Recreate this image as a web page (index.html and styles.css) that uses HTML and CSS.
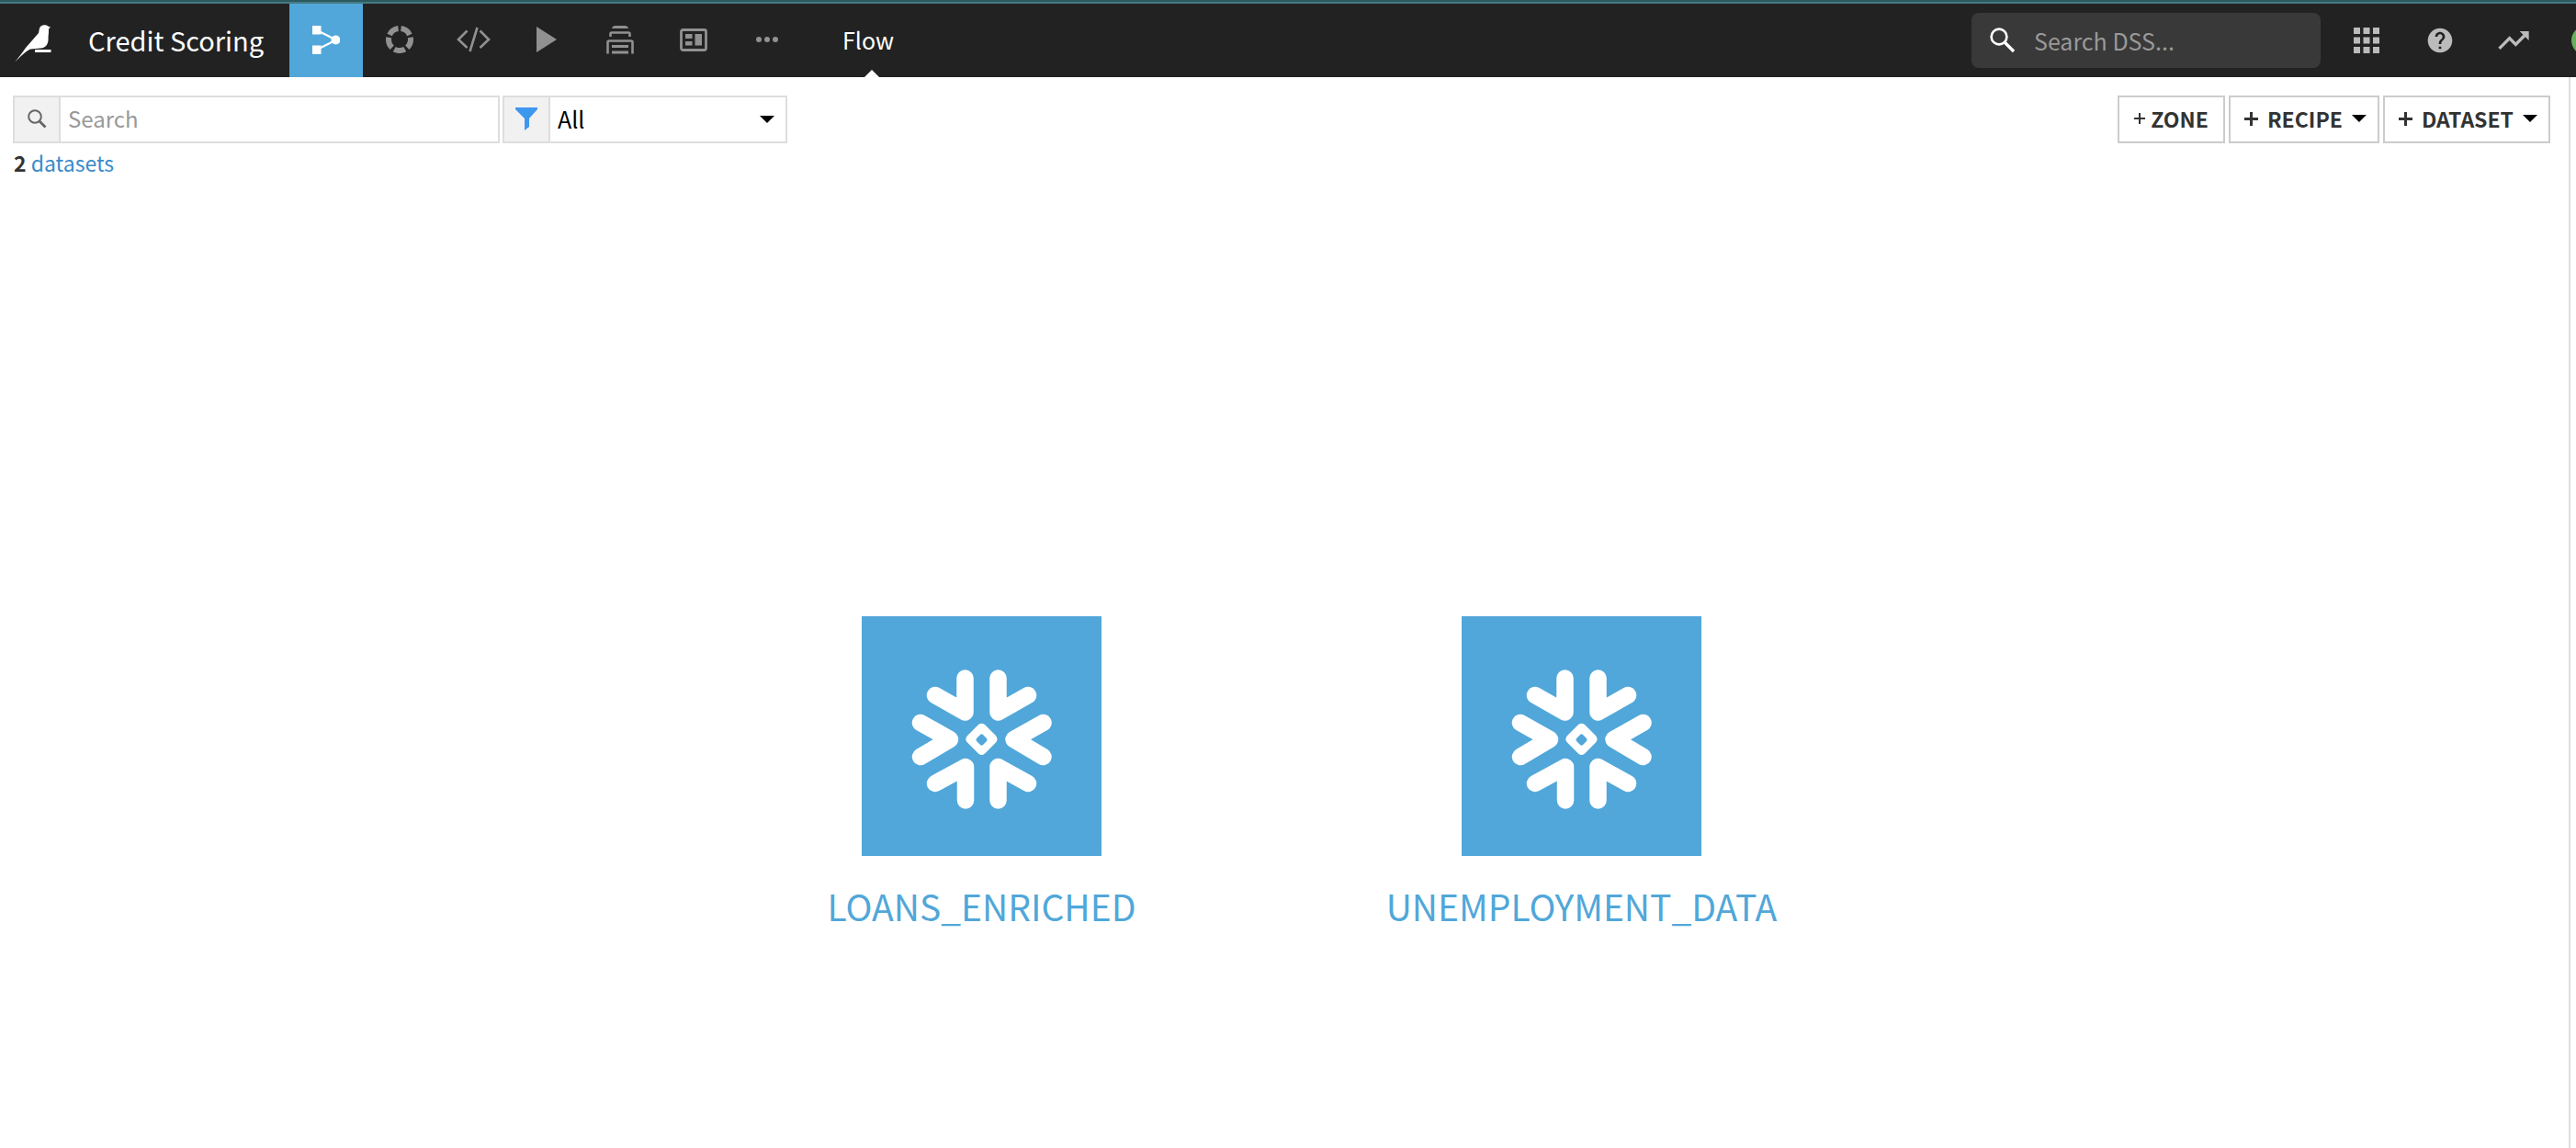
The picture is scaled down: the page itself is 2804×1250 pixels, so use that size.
FILE: index.html
```html
<!DOCTYPE html>
<html lang="en">
<head>
<meta charset="utf-8">
<title>Credit Scoring – Flow</title>
<link rel="stylesheet" href="styles.css">
</head>
<body>
<header class="topbar">
  <a class="logo" href="#" aria-label="Home">
    <svg width="40" height="41" viewBox="0 0 40 41"><path fill="#fff" d="M0 40.500C4 36 8 31 12 25L26 9C27 5 26.500 4 28 2C30-.5 35-.5 37 2L39 2.500L37 4.500C37 8 37 10 36.500 13C37 20 35 25 28 25.500L17 26.500C12 29 7 34 0 40.500Z"/><path fill="#fff" d="M22 27H39.500V30H22Z"/></svg>
  </a>
  <a class="project" href="#">Credit Scoring</a>
  <nav class="nav" aria-label="Project">
    <a class="nav-item active" href="#" aria-label="Flow"><svg width="30" height="31" viewBox="0 0 30 31"><path d="M5 5L26 15.500L5 26" fill="none" stroke="#fff" stroke-width="2.200"/><path fill="#fff" d="M0 0H9.500V9.500H0ZM0 21.500H9.500V31H0Z"/><circle cx="25.500" cy="15.500" r="5" fill="#fff"/></svg></a>
    <a class="nav-item" href="#" aria-label="Lab"><svg width="30" height="30" viewBox="-15 -15 30 30"><circle r="12" fill="none" stroke="#919191" stroke-width="6" pathLength="100" stroke-dasharray="16 4" transform="rotate(-82.800)"/></svg></a>
    <a class="nav-item" href="#" aria-label="Code"><svg width="37" height="28" viewBox="0 0 37 28"><path d="M11.500 4.500L2 14L11.500 23M25.500 4.500L35 14L25.500 23M22.500 1L14.500 27" fill="none" stroke="#919191" stroke-width="2.600"/></svg></a>
    <a class="nav-item" href="#" aria-label="Jobs"><svg width="28" height="28" viewBox="0 0 28 28"><path d="M3 0L25 14L3 28Z" fill="#919191"/></svg></a>
    <a class="nav-item" href="#" aria-label="Deploy"><svg width="30" height="31" viewBox="0 0 30 31"><path d="M6 3Q6.500 0 10 0H20Q23.500 0 24 3ZM6 21H24V24H6ZM6 27.500H24V30.500H6Z" fill="#919191"/><path d="M4.500 12V9Q4.500 7.500 6 7.500H24Q25.500 7.500 25.500 9V12M1.500 30.500V18Q1.500 16.500 3 16.500H27Q28.500 16.500 28.500 18V30.500" fill="none" stroke="#919191" stroke-width="2.600"/></svg></a>
    <a class="nav-item" href="#" aria-label="Dashboards"><svg width="30" height="25" viewBox="0 0 30 25"><rect x="1.500" y="1.500" width="27" height="22" rx="2" fill="none" stroke="#919191" stroke-width="2.800"/><path d="M6 6H13.500V11H6ZM6 14H13.500V18.500H6ZM16.500 6H24V18.500H16.500Z" fill="#919191"/></svg></a>
    <a class="nav-item" href="#" aria-label="More"><svg width="24" height="6" viewBox="0 0 24 6"><g fill="#919191"><circle cx="3" cy="3" r="3"/><circle cx="12" cy="3" r="3"/><circle cx="21" cy="3" r="3"/></g></svg></a>
  </nav>
  <a class="crumb" href="#">Flow</a>
  <div class="tools">
    <label class="dss-search">
      <svg width="28" height="28" viewBox="0 0 28 28"><circle cx="10" cy="10" r="8.400" fill="none" stroke="#fff" stroke-width="2.600"/><path d="M16 16L26 26" stroke="#fff" stroke-width="3.400"/></svg>
      <input type="search" placeholder="Search DSS..." aria-label="Search DSS">
    </label>
    <button class="tool" aria-label="Applications"><svg width="28" height="28" viewBox="0 0 28 28"><path fill="#bbb" d="M0 0H7V7H0ZM10.500 0H17.500V7H10.500ZM21 0H28V7H21ZM0 10.500H7V17.500H0ZM10.500 10.500H17.500V17.500H10.500ZM21 10.500H28V17.500H21ZM0 21H7V28H0ZM10.500 21H17.500V28H10.500ZM21 21H28V28H21Z"/></svg></button>
    <button class="tool" aria-label="Help"><svg width="32" height="32" viewBox="0 0 24 24"><path fill="#bbb" d="M12 2C6.480 2 2 6.480 2 12s4.480 10 10 10 10-4.480 10-10S17.520 2 12 2zm1 17h-2v-2h2v2zm2.070-7.750l-.9.920C13.450 12.900 13 13.500 13 15h-2v-.5c0-1.100.45-2.100 1.170-2.830l1.240-1.260c.37-.36.590-.86.590-1.410 0-1.100-.9-2-2-2s-2 .9-2 2H8c0-2.210 1.790-4 4-4s4 1.790 4 4c0 .88-.36 1.680-.93 2.250z"/></svg></button>
    <button class="tool" aria-label="Activity"><svg width="40" height="40" viewBox="0 0 24 24"><path fill="#bbb" d="M16 6l2.290 2.290-4.880 4.880-4-4L2 16.590 3.410 18l6-6 4 4 6.300-6.290L22 12V6z"/></svg></button>
    <button class="avatar" aria-label="Profile"></button>
  </div>
</header>
<main class="page">
  <section class="content">
    <div class="toolbar">
      <label class="field search">
        <span class="addon"><svg width="21" height="21" viewBox="0 0 21 21"><circle cx="8" cy="8" r="6.800" fill="none" stroke="#666" stroke-width="2"/><path d="M12.500 12.500L19.500 19.500" stroke="#666" stroke-width="2.800"/></svg></span>
        <input type="text" placeholder="Search" aria-label="Search">
      </label>
      <label class="field filter">
        <span class="addon"><svg width="24" height="25" viewBox="0 0 24 25"><path fill="#3e97ef" d="M0 0H24V2L15 12V21L10 25V12L0 2Z"/></svg></span>
        <select aria-label="Filter"><option>All</option></select>
        <span class="caret"></span>
      </label>
      <div class="actions">
        <button class="btn zone"><svg width="12" height="14" viewBox="0 0 12 14"><path d="M0 7H12M6 1V13" stroke="#333" stroke-width="2"/></svg>ZONE</button>
        <button class="btn"><svg width="15" height="15" viewBox="0 0 15 15"><path d="M0 7.500H15M7.500 0V15" stroke="#333" stroke-width="3"/></svg>RECIPE<span class="caret"></span></button>
        <button class="btn"><svg width="15" height="15" viewBox="0 0 15 15"><path d="M0 7.500H15M7.500 0V15" stroke="#333" stroke-width="3"/></svg>DATASET<span class="caret"></span></button>
      </div>
    </div>
    <p class="count"><b>2</b> <a href="#">datasets</a></p>
    <div class="flow">
      <a class="node" href="#"><svg class="tile" viewBox="0 0 261 261"><rect width="261" height="261" fill="#51a7d9"/><g id="flake"><g fill="none" stroke="#fff" stroke-width="18.500" stroke-linecap="round" stroke-linejoin="round"><path d="M80 86L112.500 104.500V67.500M181 86L148.500 104.500V67.500M80 182L113 164V200.500M181 182L148.500 164V200.500M64 116L96 134L64 153M197.500 116L165.500 134L197.500 153"/></g><path fill="#fff" fill-rule="evenodd" d="M127 118Q130.500 115.500 134 118L146 130Q149 134 146 137.500L134 149.500Q130.500 152.500 127 149.500L115 137.500Q111.500 134 115 130ZM129 129L125 133Q124 134.500 125 136L129 140Q130.500 141.500 132 140L136 136Q137 134.500 136 133L132 129Q130.500 127.500 129 129Z"/></g></svg><span>LOANS_ENRICHED</span></a>
      <a class="node" href="#"><svg class="tile" viewBox="0 0 261 261"><rect width="261" height="261" fill="#51a7d9"/><use href="#flake"/></svg><span>UNEMPLOYMENT_DATA</span></a>
    </div>
  </section>
  <aside class="rail"></aside>
</main>
</body>
</html>
```
FILE: styles.css
```css
* { box-sizing: border-box; }

body {
  margin: 0;
  min-height: 100vh;
  display: flex;
  flex-direction: column;
  overflow-x: hidden;
  background: #fff;
  color: #333;
  font-family: "Noto Sans CJK SC", "Noto Sans", sans-serif;
  font-size: 24px;
  line-height: 32px;
}

a { color: inherit; text-decoration: none; }
svg { display: block; flex: none; }
button, input, select { font: inherit; color: inherit; margin: 0; padding: 0; border: 0; background: none; }

/* Top bar */
.topbar {
  display: flex;
  height: 84px;
  border-top: 2px solid #285a60;
  box-shadow: inset 0 2px #467a82;
  background: #222;
  color: #fff;
}
.logo { padding: 25px 0 0 16px; width: 96px; }
.project { width: 219px; padding-top: 25px; font-size: 29px; white-space: nowrap; }
.nav { display: flex; padding-top: 2px; }
.nav-item { width: 80px; display: flex; align-items: center; justify-content: center; padding-bottom: 2px; }
.nav-item.active { background: #51a7d9; }
.crumb { position: relative; margin-left: 42px; padding-top: 25px; font-size: 25px; }
.crumb::after {
  content: "";
  position: absolute;
  right: -8px;
  bottom: 0;
  left: 0;
  width: 16px;
  height: 8px;
  margin: 0 auto;
  background: #fff;
  clip-path: polygon(50% 0, 100% 100%, 0 100%);
}
.tools { display: flex; align-items: center; margin-left: auto; margin-right: -27px; padding-top: 2px; }
.dss-search {
  display: flex;
  align-items: center;
  width: 380px;
  height: 60px;
  margin-right: 10px;
  padding-left: 20px;
  gap: 20px;
  border-radius: 8px;
  background: #393939;
}
.dss-search input { width: 280px; outline: 0; font-size: 25px; }
.dss-search input::placeholder { color: #999; opacity: 1; }
.tool { width: 80px; height: 80px; display: flex; align-items: center; justify-content: center; }
.avatar { width: 32px; height: 32px; margin-left: 23px; border-radius: 50%; background: #67ae5b; }

/* Flow page */
.page { flex: 1; display: flex; }
.content { flex: 1; display: flex; flex-direction: column; padding: 20px 20px 0 14px; }
.rail { width: 8px; border-left: 2px solid #ddd; }

.toolbar { display: flex; gap: 3px; }
.field { position: relative; display: flex; height: 52px; border: 2px solid #ddd; }
.search { width: 530px; }
.filter { width: 310px; }
.addon {
  flex: none;
  width: 50px;
  display: flex;
  align-items: center;
  justify-content: center;
  padding-bottom: 2px;
  border-right: 2px solid #ddd;
  background: #f1f1f1;
}
.field input, .field select { flex: 1; min-width: 0; padding: 0 0 2px 8px; outline: 0; }
.field select { appearance: none; color: #000; font-size: 25px; }
.field input::placeholder { color: #999; opacity: 1; }
.caret { width: 16px; height: 8px; background: #000; clip-path: polygon(0 0, 100% 0, 50% 100%); }
.filter .caret { position: absolute; right: 12px; top: 20px; }

.actions { display: flex; gap: 4px; margin-left: auto; }
.btn {
  display: flex;
  align-items: center;
  height: 52px;
  padding: 0 12px 2px 15px;
  gap: 10px;
  border: 2px solid #ccc;
  background: #fff;
  color: #333;
  font-weight: 700;
  font-size: 23px;
}
.zone { padding: 0 16px 2px; gap: 6px; }

.count { margin: 5px 0 0 1px; font-size: 23px; }
.count a { color: #3b8bca; }

.flow { display: grid; grid-template-columns: 653px 653px; justify-content: center; margin-top: 478px; }
.node { display: flex; flex-direction: column; align-items: center; color: #51a7d9; font-size: 39px; line-height: 48px; }
.tile { width: 261px; height: 261px; }
.node span { margin-top: 30px; }
```
